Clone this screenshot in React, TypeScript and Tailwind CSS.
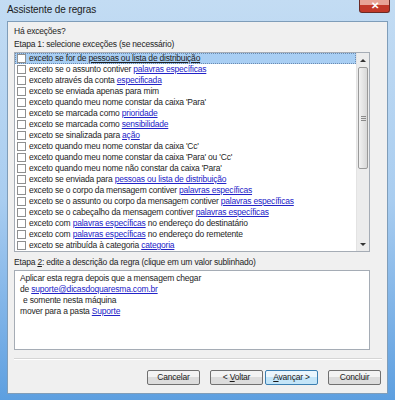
import React from "react";

type Part = { t: string; link?: boolean };

const rules: Part[][] = [
  [{ t: "exceto se for de " }, { t: "pessoas ou lista de distribuição", link: true }],
  [{ t: "exceto se o assunto contiver " }, { t: "palavras específicas", link: true }],
  [{ t: "exceto através da conta " }, { t: "especificada", link: true }],
  [{ t: "exceto se enviada apenas para mim" }],
  [{ t: "exceto quando meu nome constar da caixa 'Para'" }],
  [{ t: "exceto se marcada como " }, { t: "prioridade", link: true }],
  [{ t: "exceto se marcada como " }, { t: "sensibilidade", link: true }],
  [{ t: "exceto se sinalizada para " }, { t: "ação", link: true }],
  [{ t: "exceto quando meu nome constar da caixa 'Cc'" }],
  [{ t: "exceto quando meu nome constar da caixa 'Para' ou 'Cc'" }],
  [{ t: "exceto quando meu nome não constar da caixa 'Para'" }],
  [{ t: "exceto se enviada para " }, { t: "pessoas ou lista de distribuição", link: true }],
  [{ t: "exceto se o corpo da mensagem contiver " }, { t: "palavras específicas", link: true }],
  [{ t: "exceto se o assunto ou corpo da mensagem contiver " }, { t: "palavras específicas", link: true }],
  [{ t: "exceto se o cabeçalho da mensagem contiver " }, { t: "palavras específicas", link: true }],
  [{ t: "exceto com " }, { t: "palavras específicas", link: true }, { t: " no endereço do destinatário" }],
  [{ t: "exceto com " }, { t: "palavras específicas", link: true }, { t: " no endereço do remetente" }],
  [{ t: "exceto se atribuída à categoria " }, { t: "categoria", link: true }],
];

const Link = ({ children }: { children: React.ReactNode }) => (
  <span className="text-[#2323c8] underline">{children}</span>
);

const Button = ({ children, primary }: { children: React.ReactNode; primary?: boolean }) => (
  <div
    className={
      primary
        ? "flex h-[15px] w-[53px] items-center justify-center rounded-[2px] border border-[#3c7fb1] bg-gradient-to-b from-[#eaf6fd] from-50% to-[#c4e5f8] to-50% text-[#1a1a1a]"
        : "flex h-[15px] w-[53px] items-center justify-center rounded-[2px] border border-[#707070] bg-gradient-to-b from-[#f3f3f3] from-50% to-[#dcdcdc] to-50% text-[#1a1a1a]"
    }
  >
    <span className="whitespace-pre">{children}</span>
  </div>
);

const ScrollBar = () => (
  <div className="flex w-[13px] flex-col bg-[#ececec] border-l border-[#e3e3e3]">
    {/* up arrow */}
    <div className="flex h-[14px] items-center justify-center">
      <div className="h-0 w-0 border-x-[3px] border-b-[3px] border-x-transparent border-b-[#333]" />
    </div>
    {/* thumb */}
    <div className="mx-[1px] flex h-[102px] items-center justify-center rounded-[2px] border border-[#9a9a9a] bg-gradient-to-r from-[#f2f2f2] to-[#d8d8d8]">
      <div className="flex flex-col gap-[1px]">
        <div className="h-px w-[5px] bg-[#8a8a8a]" />
        <div className="h-px w-[5px] bg-[#8a8a8a]" />
        <div className="h-px w-[5px] bg-[#8a8a8a]" />
      </div>
    </div>
    <div className="flex-1" />
    {/* down arrow */}
    <div className="flex h-[14px] items-center justify-center">
      <div className="h-0 w-0 border-x-[3px] border-t-[3px] border-x-transparent border-t-[#333]" />
    </div>
  </div>
);

const App = () => {
  return (
    <div
      className="flex h-[400px] w-[395px] flex-col bg-gradient-to-b from-[#c3dcf3] via-[#a9cdf0] to-[#5d9fe0] px-[7px] pb-[6px] text-[8.5px] leading-[11px] tracking-[-0.2px] text-[#1e1e1e]"
      style={{ fontFamily: '"Liberation Sans", Arial, sans-serif' }}
    >
      {/* Title bar */}
      <div className="flex h-[21px] items-start justify-between">
        <div className="mt-[3px] text-[10px] leading-[14px] tracking-[-0.1px] text-[#1a1a1a]">Assistente de regras</div>
        <div className="-mr-[2px] flex h-[13px] w-[31px] items-center justify-center rounded-b-[3px] border border-t-0 border-[#6b2a25] bg-gradient-to-b from-[#e8a396] from-40% to-[#c2392a] to-40%">
          <span className="text-[10px] font-bold leading-[10px] text-white">✕</span>
        </div>
      </div>

      {/* Client area */}
      <div className="flex flex-1 flex-col border border-[#7f9db9] bg-[#f0f0f0] px-[6px] pt-[4px]">
        <div className="h-[11px]">Há exceções?</div>
        <div className="mt-[2px] h-[11px]">Etapa 1: selecione exceções (se necessário)</div>

        {/* List */}
        <div className="mr-[11px] mt-[2px] flex h-[200px] border border-[#a5acb5] bg-white">
          <div className="flex flex-1 flex-col overflow-hidden">
            {rules.map((parts, i) => (
              <div
                key={i}
                className={
                  i === 0
                    ? "flex h-[11px] items-center whitespace-nowrap border border-dotted border-[#6a8ab0] bg-[#a8cef3] pl-[1px]"
                    : "flex h-[11px] items-center whitespace-nowrap pl-[2px]"
                }
              >
                <div className="mr-[3px] h-[9px] w-[9px] shrink-0 border border-[#8e8f8f] bg-white" />
                <span className="whitespace-pre">
                  {parts.map((p, j) =>
                    p.link ? (
                      i === 0 ? (
                        <span key={j} className="underline">{p.t}</span>
                      ) : (
                        <Link key={j}>{p.t}</Link>
                      )
                    ) : (
                      <span key={j}>{p.t}</span>
                    )
                  )}
                </span>
              </div>
            ))}
          </div>
          <ScrollBar />
        </div>

        <div className="mt-[5px] h-[11px]">
          Etapa <span className="underline">2</span>: edite a descrição da regra (clique em um valor sublinhado)
        </div>

        {/* Description */}
        <div className="mr-[11px] mt-[2px] h-[80px] border border-[#a5acb5] bg-white px-[5px] pt-[2px]">
          <div>Aplicar esta regra depois que a mensagem chegar</div>
          <div>
            de <Link>suporte@dicasdoquaresma.com.br</Link>
          </div>
          <div className="pl-[3px]">e somente nesta máquina</div>
          <div>
            mover para a pasta <Link>Suporte</Link>
          </div>
        </div>

        <div className="mr-[-1px] mt-[8px] h-[2px] border-t border-b border-t-[#d5d5d5] border-b-white" />

        <div className="mt-[10px] flex justify-end">
          <Button>Cancelar</Button>
          <div className="ml-[10px]">
            <Button>
              {"< "}
              <span className="underline">V</span>oltar
            </Button>
          </div>
          <div className="ml-[2px]">
            <Button primary>
              <span className="underline">A</span>
              {"vançar >"}
            </Button>
          </div>
          <div className="ml-[10px]">
            <Button>Concluir</Button>
          </div>
        </div>
      </div>
    </div>
  );
};

export default App;
